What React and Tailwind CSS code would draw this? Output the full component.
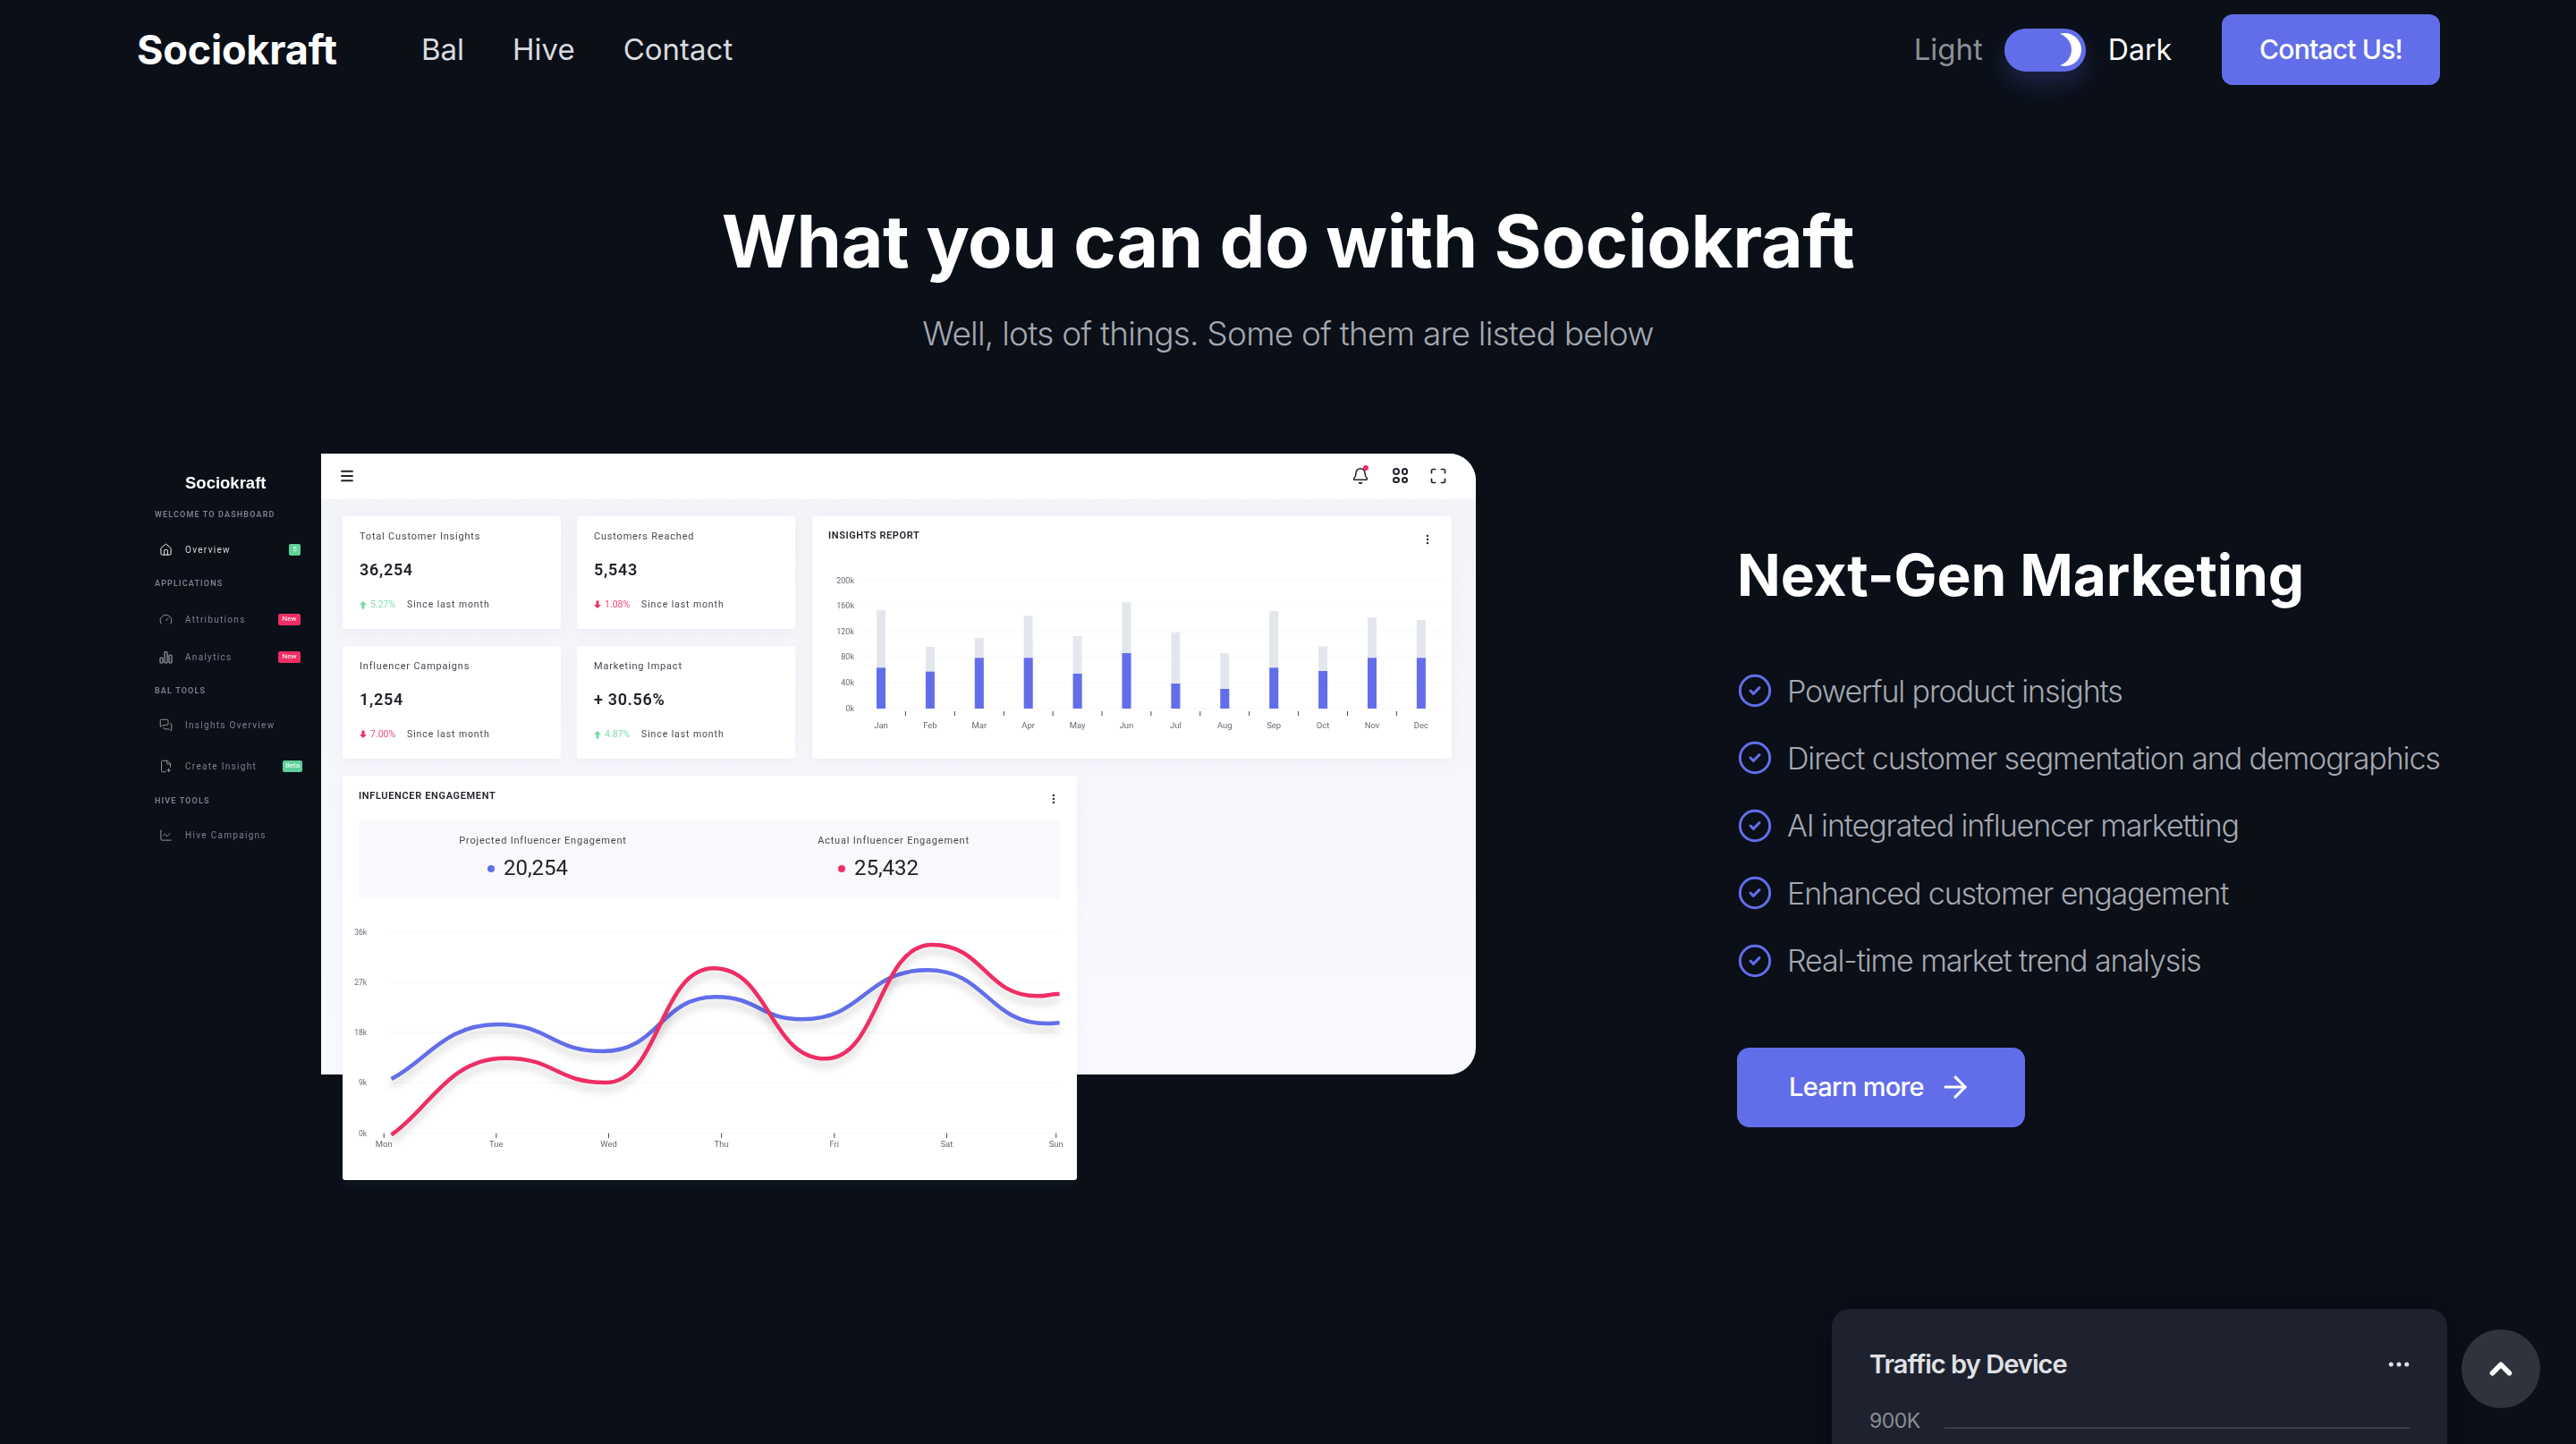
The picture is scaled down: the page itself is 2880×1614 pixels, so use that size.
import React from "react";
import {
    ArrowRight,
    Bell,
    ChevronUp,
    CircleCheck,
    Ellipsis,
    EllipsisVertical,
    FilePlus2,
    Gauge,
    House,
    LineChart,
    Maximize,
    Menu,
    MessagesSquare,
} from "lucide-react";

const months = ["Jan", "Feb", "Mar", "Apr", "May", "Jun", "Jul", "Aug", "Sep", "Oct", "Nov", "Dec"];
const greyTops = [546, 669, 639, 565, 633, 519, 621, 690, 549, 667, 570, 579];
const blueTops = [739, 752, 706, 706, 759, 690, 792, 810, 739, 750, 706, 706];
const days = [
    ["Mon", 108],
    ["Tue", 337],
    ["Wed", 566],
    ["Thu", 796],
    ["Fri", 1026],
    ["Sat", 1255],
    ["Sun", 1478],
];
const bluePoints = [[123, 1068], [340, 885], [555, 975], [785, 793], [960, 868], [1215, 703], [1460, 882], [1485, 880]];
const redPoints = [[123, 1255], [355, 998], [560, 1080], [780, 697], [1008, 1000], [1225, 618], [1440, 790], [1485, 783]];

const lineX = (x) => 370 + x / 1.823 - 383;
const lineY = (y) => 850 + y / 3 - 1004;

const smoothPath = (points) => {
    const pts = points.map(([x, y]) => [lineX(x), lineY(y)]);
    let d = `M${pts[0][0]} ${pts[0][1]}`;
    for (let i = 1; i < pts.length; i++) {
        const [x0, y0] = pts[i - 1];
        const [x1, y1] = pts[i];
        const mid = (x0 + x1) / 2;
        // first segment leaves at a slope, the others flat from each peak
        const startY = i === 1 ? y0 + (y1 - y0) / 3 : y0;
        const startX = i === 1 ? x0 + (x1 - x0) / 3 : mid;
        d += ` C${startX} ${startY} ${mid} ${y1} ${x1} ${y1}`;
    }
    return d;
};

function TrendArrow({ up }) {
    return (
        <svg width="8" height="10" viewBox="0 0 8 10" className={up ? "mr-[4px] fill-[#6fdba5]" : "mr-[4px] rotate-180 fill-[#ee2e64]"}>
            <path d="M4 1 L8 5 L5.5 5 L5.5 9.5 L2.5 9.5 L2.5 5 L0 5 Z" />
        </svg>
    );
}

function StatCard({ title, value, change, up }) {
    return (
        <div className="h-[126px] w-[244px] rounded-[3px] bg-white pl-[19px] pt-[15px] shadow-[0_4px_14px_rgba(120,130,170,0.07)]">
            <div className="text-[11px] leading-[16px] tracking-[0.8px] text-[#444750]">{title}</div>
            <div className="mt-[17px] text-[18px] font-semibold leading-[24px] tracking-[0.7px] text-[#20232b]">{value}</div>
            <div className="mt-[20px] flex items-center text-[10.5px] leading-[14px]">
                <TrendArrow up={up} />
                <span className={up ? "w-[41px] text-[#7fdcae]" : "w-[41px] text-[#ee4a78]"}>{change}</span>
                <span className="tracking-[0.9px] text-[#444750]">Since last month</span>
            </div>
        </div>
    );
}

function SideLabel({ children, className }) {
    return <div className={`ml-[23px] text-[9px] font-semibold leading-[12px] tracking-[1.15px] text-[#7d828e] ${className}`}>{children}</div>;
}

function BarsIcon({ className }) {
    return (
        <svg width="15" height="15" viewBox="0 0 15 15" fill="none" stroke="currentColor" strokeWidth="1.2" className={className}>
            <rect x="1" y="8" width="3" height="6" rx="1" />
            <rect x="6" y="1.5" width="3" height="12.5" rx="1" />
            <rect x="11" y="5" width="3" height="9" rx="1" />
        </svg>
    );
}

function SideItem({ icon: Icon, label, badge, active, className }) {
    return (
        <div className={`flex h-[16px] items-center pl-[28px] pr-[23px] ${className}`}>
            <Icon size={15} width={15} height={15} strokeWidth={1.5} className={active ? "text-white" : "text-[#9a9ea8]"} />
            <span className={`ml-[14px] text-[10px] tracking-[1.3px] ${active ? "text-[#d6d8dd]" : "text-[#7d828e]"}`}>{label}</span>
            {badge === "5" && (
                <span className="ml-auto flex h-[13px] w-[13px] items-center justify-center rounded-[2px] bg-[#5fd09a] text-[8px] text-white">5</span>
            )}
            {badge === "New" && (
                <span className="ml-auto flex h-[13px] w-[25px] items-center justify-center rounded-[2px] bg-[#ee2e64] text-[8px] text-white">New</span>
            )}
            {badge === "Beta" && (
                <span className="-mr-[2px] ml-auto flex h-[13px] w-[22px] items-center justify-center rounded-[2px] bg-[#5fd09a] text-[8px] text-white">Beta</span>
            )}
        </div>
    );
}

function Sidebar() {
    return (
        <div className="w-[209px] pt-[23px]">
            <div className="pl-[57px] font-['Liberation_Sans',sans-serif] text-[18.5px] font-bold leading-[20px] text-white">Sociokraft</div>
            <SideLabel className="mt-[19px]">WELCOME TO DASHBOARD</SideLabel>
            <SideItem icon={House} label="Overview" badge="5" active className="mt-[25px]" />
            <SideLabel className="mt-[24px]">APPLICATIONS</SideLabel>
            <SideItem icon={Gauge} label="Attributions" badge="New" className="mt-[26px]" />
            <SideItem icon={BarsIcon} label="Analytics" badge="New" className="mt-[26px]" />
            <SideLabel className="mt-[24px]">BAL TOOLS</SideLabel>
            <SideItem icon={MessagesSquare} label="Insights Overview" className="mt-[24px]" />
            <SideItem icon={FilePlus2} label="Create Insight" badge="Beta" className="mt-[30px]" />
            <SideLabel className="mt-[25px]">HIVE TOOLS</SideLabel>
            <SideItem icon={LineChart} label="Hive Campaigns" className="mt-[24px]" />
        </div>
    );
}

function InsightsCard() {
    const labels = ["200k", "160k", "120k", "80k", "40k", "0k"];
    const labelY = [649, 677, 706, 734, 763, 792];
    return (
        <div className="ml-[19px] h-[271px] w-[715px] rounded-[3px] bg-white shadow-[0_4px_14px_rgba(120,130,170,0.07)]">
            <div className="flex h-[45px] items-start justify-between pl-[18px] pr-[20px] pt-[14px]">
                <span className="text-[11px] font-semibold leading-[16px] tracking-[0.6px] text-[#20232b]">INSIGHTS REPORT</span>
                <EllipsisVertical size={14} strokeWidth={2.4} className="mt-[5px] text-[#30333b]" />
            </div>
            <svg width="715" height="226" className="block">
                {labelY.map((y, i) => (
                    <g key={y}>
                        <line x1="54" x2="705" y1={y - 622} y2={y - 622} stroke="#f6f7fa" />
                        <text x="47" y={y - 619} textAnchor="end" fontSize="9" fill="#666a74">{labels[i]}</text>
                    </g>
                ))}
                {months.map((month, i) => {
                    const cx = 985 + i * 54.9 - 908;
                    const grey = 500 + greyTops[i] / 3 - 622;
                    const blue = 500 + blueTops[i] / 3 - 622;
                    return (
                        <g key={month}>
                            <rect x={cx - 5} y={grey} width="10" height={170 - grey} fill="#e3e7ed" />
                            <rect x={cx - 5} y={blue} width="10" height={170 - blue} fill="#626ee9" />
                            {i < 11 && <line x1={cx + 27.4} x2={cx + 27.4} y1="173" y2="178" stroke="#444750" />}
                            <text x={cx} y="192" textAnchor="middle" fontSize="9.5" fill="#666a74">{month}</text>
                        </g>
                    );
                })}
            </svg>
        </div>
    );
}

function EngagementCard() {
    return (
        <div className="mt-[19px] h-[452px] w-[821px] rounded-[3px] bg-white shadow-[0_4px_14px_rgba(120,130,170,0.07)]">
            <div className="flex h-[50px] items-start justify-between pl-[18px] pr-[19px] pt-[15px]">
                <span className="text-[11px] font-semibold leading-[16px] tracking-[0.65px] text-[#20232b]">INFLUENCER ENGAGEMENT</span>
                <EllipsisVertical size={14} strokeWidth={2.4} className="mt-[4px] text-[#30333b]" />
            </div>
            <div className="mx-[18px] flex h-[87px] w-[784px] bg-[#f8f8fd] pl-[10px] pt-[15px]">
                {[
                    ["Projected Influencer Engagement", "20,254", "bg-[#626ee9]"],
                    ["Actual Influencer Engagement", "25,432", "bg-[#ee2e64]"],
                ].map(([label, value, dot]) => (
                    <div key={label} className="w-[392px] shrink-0 text-center">
                        <div className="text-[11px] leading-[16px] tracking-[0.8px] text-[#444750]">{label}</div>
                        <div className="mt-[8px] flex items-center justify-center pr-[34px] text-[24px] leading-[28px] text-[#20232b]">
                            <span className={`mr-[10px] mt-[2px] h-[8px] w-[8px] rounded-full ${dot}`}></span>
                            {value}
                        </div>
                    </div>
                ))}
            </div>
            <svg width="821" height="315" className="block">
                {[575, 745, 912, 1080, 1250].map((y, i) => (
                    <g key={y}>
                        <line x1={lineX(123)} x2={lineX(1485)} y1={lineY(y)} y2={lineY(y)} stroke="#f7f7fa" />
                        <text x="27" y={lineY(y) + 3} textAnchor="end" fontSize="8.5" fill="#666a74">{["36k", "27k", "18k", "9k", "0k"][i]}</text>
                    </g>
                ))}
                {days.map(([day, x]) => (
                    <g key={day}>
                        <line x1={lineX(x)} x2={lineX(x)} y1={lineY(1250)} y2={lineY(1266)} stroke="#444750" />
                        <text x={lineX(x)} y={lineY(1288) + 3} textAnchor="middle" fontSize="9.5" fill="#666a74">{day}</text>
                    </g>
                ))}
                <path d={smoothPath(bluePoints)} fill="none" stroke="#626ee9" strokeWidth="4.5" className="drop-shadow-[0_7px_4px_rgba(0,0,0,0.18)]" />
                <path d={smoothPath(redPoints)} fill="none" stroke="#ee2e64" strokeWidth="4.5" className="drop-shadow-[0_7px_4px_rgba(0,0,0,0.18)]" />
            </svg>
        </div>
    );
}

function Dashboard() {
    return (
        <div className="flex h-[694px] w-[1500px] shrink-0 font-['Roboto',sans-serif] blur-[0.4px]">
            <Sidebar />
            <div className="h-[694px] w-[1291px] rounded-r-[30px] bg-linear-to-b from-[#f3f4f8] to-[#f9faff]">
                <div className="flex h-[51px] items-center rounded-tr-[30px] bg-white pb-[2px] pl-[20px] pr-[32px]">
                    <Menu size={18} strokeWidth={2.4} className="text-[#20232b]" />
                    <div className="relative ml-auto">
                        <Bell size={20} strokeWidth={1.8} className="text-[#20232b]" />
                        <span className="absolute right-[1px] top-[-2px] h-[6px] w-[6px] rounded-full bg-[#ee2e64]"></span>
                    </div>
                    <div className="ml-[26px] grid grid-cols-2 gap-[2px]">
                        {[0, 1, 2, 3].map((i) => (
                            <span key={i} className="h-[7.5px] w-[7.5px] rounded-full border-2 border-[#20232b]"></span>
                        ))}
                    </div>
                    <Maximize size={20} strokeWidth={2} className="ml-[24px] text-[#20232b]" />
                </div>
                <div className="pl-[24px] pt-[19px]">
                    <div className="flex">
                        <div className="grid grid-cols-[244px_244px] gap-x-[18px] gap-y-[19px]">
                            <StatCard title="Total Customer Insights" value="36,254" change="5.27%" up />
                            <StatCard title="Customers Reached" value="5,543" change="1.08%" />
                            <StatCard title="Influencer Campaigns" value="1,254" change="7.00%" />
                            <StatCard title="Marketing Impact" value="+ 30.56%" change="4.87%" up />
                        </div>
                        <InsightsCard />
                    </div>
                    <EngagementCard />
                </div>
            </div>
        </div>
    );
}

export default function App() {
    const features = [
        "Powerful product insights",
        "Direct customer segmentation and demographics",
        "AI integrated influencer marketting",
        "Enhanced customer engagement",
        "Real-time market trend analysis",
    ];

    return (
        <div className="relative h-[1614px] overflow-hidden bg-[#0a0f18] font-['Inter',sans-serif]">
            <nav className="flex h-[111px] items-center pl-[153px] pr-[152px]">
                <span className="text-[45px] font-bold tracking-[-0.2px] text-white">Sociokraft</span>
                <div className="ml-[94px] flex gap-[54px] text-[33px] text-[#d9dadd]">
                    <span>Bal</span>
                    <span>Hive</span>
                    <span>Contact</span>
                </div>
                <div className="ml-auto flex items-center">
                    <span className="text-[33px] text-[#8c8f95]">Light</span>
                    <div className="ml-[24px] flex h-[48px] w-[91px] items-center justify-end rounded-full bg-[#626ee9] pr-[5px] shadow-[0_14px_26px_rgba(98,110,233,0.22)]">
                        <span className="h-[37px] w-[37px] rounded-full shadow-[inset_-11px_0_0_0_#fff]"></span>
                    </div>
                    <span className="ml-[25px] text-[32px] text-white">Dark</span>
                </div>
                <button className="ml-[56px] h-[79px] w-[244px] rounded-[12px] bg-[#626ee9] text-[30px] font-medium tracking-[-0.8px] text-white">Contact Us!</button>
            </nav>

            <h1 className="mt-[109px] text-center text-[81px] font-bold leading-[100px] tracking-[-0.4px] text-white">What you can do with Sociokraft</h1>
            <p className="mt-[28px] text-center text-[37px] font-light leading-[50px] tracking-[-0.76px] text-[#a5a8b0]">Well, lots of things. Some of them are listed below</p>

            <section className="mt-[109px] flex h-[694px] pl-[150px]">
                <Dashboard />
                <div className="ml-[292px] pt-[96px]">
                    <h2 className="text-[64px] font-bold leading-[80px] tracking-[-0.1px] text-white">Next-Gen Marketing</h2>
                    <ul className="mt-[69px] flex flex-col gap-[35.4px]">
                        {features.map((feature) => (
                            <li key={feature} className="flex h-[40px] items-center whitespace-nowrap text-[34px] font-light tracking-[-1.1px] text-[#a5a8b0]">
                                <CircleCheck size={40} strokeWidth={1.8} className="mr-[16px] text-[#626ee9]" />
                                {feature}
                            </li>
                        ))}
                    </ul>
                    <button className="mt-[77px] flex h-[89px] w-[322px] items-center rounded-[14px] bg-[#626ee9] pl-[58px] text-[29px] font-medium tracking-[-0.7px] text-white">
                        Learn more
                        <ArrowRight size={38} strokeWidth={1.9} className="ml-[16px]" />
                    </button>
                </div>
            </section>

            <div className="ml-[2048px] mt-[262px] h-[260px] w-[688px] rounded-[20px] bg-[#1e222f] pl-[42px] pr-[39px] pt-[40px] shadow-[0_0_40px_rgba(0,0,0,0.25)]">
                <div className="flex items-center justify-between">
                    <span className="text-[29px] font-semibold tracking-[-0.95px] text-[#e0e1e4]">Traffic by Device</span>
                    <Ellipsis size={30} className="text-[#e0e1e4]" />
                </div>
                <div className="mt-[25px] flex items-end">
                    <span className="text-[23px] leading-[32px] tracking-[-0.5px] text-[#8c8f95]">900K</span>
                    <div className="mb-[7px] ml-[27px] h-[2px] w-[520px] bg-[#3a3e4b]"></div>
                </div>
            </div>

            <button className="absolute left-[2752px] top-[1486px] flex h-[88px] w-[88px] items-center justify-center rounded-full bg-[#2f333c] text-white">
                <ChevronUp size={38} strokeWidth={3.5} />
            </button>
        </div>
    );
}
